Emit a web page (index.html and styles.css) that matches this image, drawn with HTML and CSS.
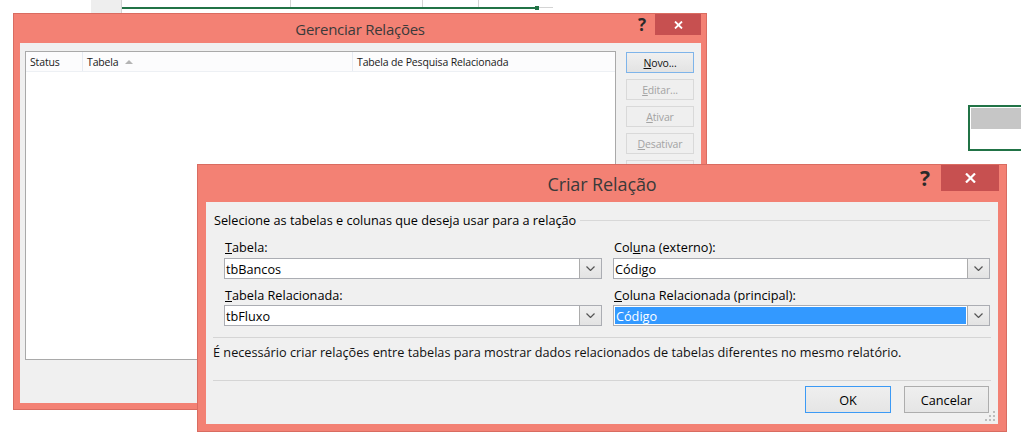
FILE: index.html
```html
<!DOCTYPE html>
<html lang="pt-BR">
<head>
<meta charset="utf-8">
<title>Criar Relação</title>
<link rel="stylesheet" href="styles.css">
</head>
<body>
<div class="desk">
  <!-- spreadsheet fragments behind the dialogs -->
  <div class="xl-hdrcell"></div>
  <div class="xl-selline"></div>
  <div class="xl-handle"></div>
  <div class="xl-grayline"></div>
  <div class="xl-vline v1"></div>
  <div class="xl-vline v2"></div>
  <div class="xl-vline v3"></div>
  <div class="xl-cell"><div class="xl-cell-fill"></div></div>

  <!-- Gerenciar Relações -->
  <div class="win win1">
    <div class="tbar tbar1">
      <div class="ttl">Gerenciar Relações</div>
      <div class="tbtns">
        <span class="help">?</span>
        <span class="close"><svg width="9" height="8" viewBox="0 0 9 8"><path d="M1 0.5 L8 7.5 M8 0.5 L1 7.5" stroke="#fff" stroke-width="1.8"/></svg></span>
      </div>
    </div>
    <div class="client c1">
      <div class="list">
        <div class="lhead">
          <div class="lh col-status">Status</div>
          <div class="lh col-tabela">Tabela <svg class="sort" width="8" height="4" viewBox="0 0 8 4"><path d="M0 4 L4 0 L8 4 Z" fill="#b4b4b4"/></svg></div>
          <div class="lh col-pesq">Tabela de Pesquisa Relacionada</div>
        </div>
      </div>
      <div class="btncol">
        <div class="b1 def"><u>N</u>ovo...</div>
        <div class="b1 dis"><u>E</u>ditar...</div>
        <div class="b1 dis"><u>A</u>tivar</div>
        <div class="b1 dis"><u>D</u>esativar</div>
        <div class="b1 dis"></div>
      </div>
    </div>
  </div>

  <!-- Criar Relação -->
  <div class="win win2">
    <div class="tbar tbar2">
      <div class="ttl">Criar Relação</div>
      <div class="tbtns">
        <span class="help">?</span>
        <span class="close"><svg width="11" height="10" viewBox="0 0 11 10"><path d="M1 0.5 L10 9.5 M10 0.5 L1 9.5" stroke="#fff" stroke-width="2.2"/></svg></span>
      </div>
    </div>
    <div class="client c2">
      <div class="sechead"><span>Selecione as tabelas e colunas que deseja usar para a relação</span><span class="rule"></span></div>
      <div class="fields">
        <div class="lbl"><u>T</u>abela:</div>
        <div class="lbl">Col<u>u</u>na (externo):</div>
        <div class="combo"><span class="ctext">tbBancos</span><span class="dd"><svg width="9" height="5" viewBox="0 0 9 5"><path d="M0.5 0.5 L4.5 4.5 L8.5 0.5" fill="none" stroke="#555" stroke-width="1.2"/></svg></span></div>
        <div class="combo"><span class="ctext">Código</span><span class="dd"><svg width="9" height="5" viewBox="0 0 9 5"><path d="M0.5 0.5 L4.5 4.5 L8.5 0.5" fill="none" stroke="#555" stroke-width="1.2"/></svg></span></div>
        <div class="lbl lbl2"><u>T</u>abela Relacionada:</div>
        <div class="lbl lbl2"><u>C</u>oluna Relacionada (principal):</div>
        <div class="combo"><span class="ctext">tbFluxo</span><span class="dd"><svg width="9" height="5" viewBox="0 0 9 5"><path d="M0.5 0.5 L4.5 4.5 L8.5 0.5" fill="none" stroke="#555" stroke-width="1.2"/></svg></span></div>
        <div class="combo"><span class="ctext sel">Código</span><span class="dd"><svg width="9" height="5" viewBox="0 0 9 5"><path d="M0.5 0.5 L4.5 4.5 L8.5 0.5" fill="none" stroke="#555" stroke-width="1.2"/></svg></span></div>
      </div>
      <div class="sep"></div>
      <div class="note">É necessário criar relações entre tabelas para mostrar dados relacionados de tabelas diferentes no mesmo relatório.</div>
      <div class="sep sep2"></div>
      <div class="actions">
        <div class="b2 ok">OK</div>
        <div class="b2 cancel">Cancelar</div>
      </div>
      <svg class="grip" width="10" height="10" viewBox="0 0 10 10">
        <rect x="8" y="0" width="2" height="2" fill="#bdbdbd"/>
        <rect x="4" y="4" width="2" height="2" fill="#bdbdbd"/>
        <rect x="8" y="4" width="2" height="2" fill="#bdbdbd"/>
        <rect x="0" y="8" width="2" height="2" fill="#bdbdbd"/>
        <rect x="4" y="8" width="2" height="2" fill="#bdbdbd"/>
        <rect x="8" y="8" width="2" height="2" fill="#bdbdbd"/>
      </svg>
    </div>
  </div>
</div>
</body>
</html>
```
FILE: styles.css
```css
* { box-sizing: border-box; }
html, body { margin: 0; padding: 0; }
body {
  width: 1021px;
  height: 446px;
  overflow: hidden;
  background: #ffffff;
  font-family: "Open Sans", "Noto Sans", "Liberation Sans", sans-serif;
  color: #000;
}
.desk { position: relative; width: 1021px; height: 446px; }

/* spreadsheet fragments (background canvas) */
.xl-hdrcell { position: absolute; left: 91px; top: 0; width: 31px; height: 13px; background: #eeeeee; border-right: 1px solid #d4d4d4; }
.xl-selline { position: absolute; left: 122px; top: 7px; width: 414px; height: 2px; background: #217346; }
.xl-handle { position: absolute; left: 535px; top: 6px; width: 4px; height: 4px; background: #217346; }
.xl-grayline { position: absolute; left: 539px; top: 7px; width: 14px; height: 1px; background: #d4d4d4; }
.xl-vline { position: absolute; top: 0; width: 1px; height: 7px; background: #d4d4d4; }
.v1 { left: 290px; }
.v2 { left: 422px; }
.v3 { left: 478px; }
.xl-cell { position: absolute; left: 968px; top: 105px; width: 60px; height: 46px; border: 2px solid #217346; padding: 1px; }
.xl-cell-fill { height: 21px; background: #c6c6c6; }

/* windows */
.win {
  position: absolute;
  display: flex;
  flex-direction: column;
  background: #f38174;
  border: 1px solid #d96c61;
}
.win1 { left: 13px; top: 13px; width: 694px; height: 397px; z-index: 1; }
.win2 { left: 197px; top: 164px; width: 810px; height: 268px; z-index: 2; }

.tbar { flex: none; display: grid; grid-template-columns: 1fr auto 1fr; }
.tbar1 { height: 29px; }
.tbar2 { height: 37px; }
.ttl { grid-column: 2; align-self: center; color: #3a3a3a; white-space: nowrap; }
.tbar1 .ttl { font-size: 15px; letter-spacing: -0.25px; }
.tbar2 .ttl { font-size: 18px; letter-spacing: -0.1px; }
.tbtns { grid-column: 3; justify-self: end; display: flex; align-items: flex-start; }
.help { font-weight: bold; color: #2a2a2a; text-align: center; }
.close { display: flex; align-items: center; justify-content: center; background: #c75050; }
.tbar1 .help { font-size: 17px; line-height: 21px; height: 21px; margin-right: 9px; }
.tbar1 .close { width: 46px; height: 21px; margin-right: 5px; }
.tbar2 .help { font-size: 21px; line-height: 26px; height: 26px; margin-right: 11px; }
.tbar2 .close { width: 58px; height: 26px; margin-right: 7px; }

.client { flex: 1; background: #f0f0f0; }

/* Gerenciar Relações client */
.c1 {
  margin: 0 5px 6px 6px;
  padding: 8px 7px 0 5px;
  display: flex;
  align-items: flex-start;
  gap: 10px;
  font-size: 10.5px;
  letter-spacing: -0.15px;
}
.list { width: 591px; height: 309px; background: #fff; border: 1px solid #a9a9a9; }
.lhead { display: flex; height: 20px; border-bottom: 1px solid #edf0f4; background: #fcfcfd; }
.lh { display: flex; align-items: center; padding-left: 4px; border-right: 1px solid #e6ebf2; color: #1a1a1a; white-space: nowrap; }
.col-status { width: 57px; }
.col-tabela { width: 270px; }
.col-pesq { flex: 1; border-right: none; }
.sort { margin-left: 6px; }
.btncol { width: 68px; margin-top: 1px; display: flex; flex-direction: column; gap: 6px; }
.b1 { height: 21px; display: flex; align-items: center; justify-content: center; border: 1px solid #d9d9d9; background: #efefef; white-space: nowrap; }
.b1.def { border-color: #7eb4ea; background: linear-gradient(#f0f0f0, #e3e3e3); color: #111; }
.b1.dis { color: #a3a3a3; }

/* Criar Relação client */
.c2 {
  position: relative;
  margin: 0 8px 7px 8px;
  padding: 10px 8px 0 8px;
  display: flex;
  flex-direction: column;
  font-size: 12.7px;
}
.sechead { display: flex; align-items: center; height: 16px; line-height: 16px; gap: 4px; white-space: nowrap; }
.rule { flex: 1; height: 1px; background: #d8d8d8; }
.fields {
  margin: 11px 0 0 10px;
  display: grid;
  grid-template-columns: 378px 377px;
  column-gap: 11px;
}
.lbl { height: 16px; line-height: 16px; padding-left: 1px; margin-bottom: 3px; white-space: nowrap; }
.lbl2 { margin-top: 8px; margin-bottom: 2px; }
.combo { height: 21px; display: flex; background: #fff; border: 1px solid #abadb3; }
.ctext { flex: 1; display: flex; align-items: center; padding-left: 1px; }
.ctext.sel { margin: 1px; background: #3399ff; color: #fff; }
.dd { width: 22px; display: flex; align-items: center; justify-content: center; border-left: 1px solid #acacac; background: linear-gradient(#f0f0f0, #e3e3e3); }
.sep { height: 1px; background: #d5d5d5; margin: 11px -1px 0 -1px; }
.note { margin: 6px 0 0 -1px; height: 16px; line-height: 16px; white-space: nowrap; color: #111; }
.sep2 { margin-top: 20px; }
.actions { margin-top: 5px; margin-right: 1px; display: flex; justify-content: flex-end; gap: 13px; }
.b2 { height: 27px; display: flex; align-items: center; justify-content: center; background: linear-gradient(#efefef, #e5e5e5); border: 1px solid #adadad; }
.b2.ok { width: 86px; border-color: #3c9af5; }
.b2.cancel { width: 85px; }
.grip { position: absolute; right: 3px; bottom: 3px; }
```
